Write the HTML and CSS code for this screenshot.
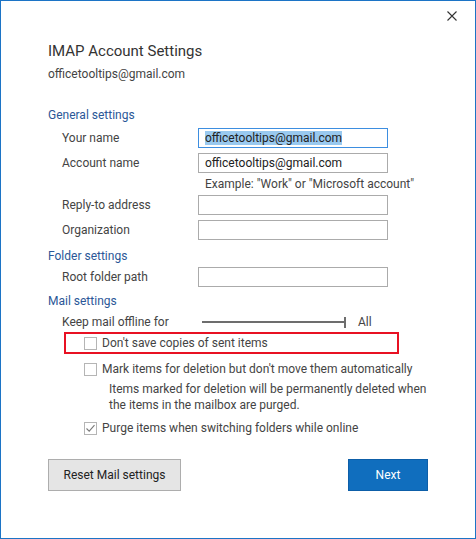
FILE: index.html
```html
<!DOCTYPE html>
<html lang="en">
<head>
    <meta charset="UTF-8">
    <meta name="viewport" content="width=device-width, initial-scale=1.0">
    <title>IMAP Account Settings</title>
    <link rel="stylesheet" href="styles.css">
</head>
<body>
    <div class="dialog">
        <div class="titlebar">
            <button class="close" type="button" aria-label="Close">
                <svg width="10" height="10" viewBox="0 0 10 10">
                    <path d="M0.5 0.5 L9.5 9.5 M9.5 0.5 L0.5 9.5" stroke="#333" stroke-width="1.1" fill="none"/>
                </svg>
            </button>
        </div>

        <h1 class="title">IMAP Account Settings</h1>
        <div class="account">officetooltips@gmail.com</div>

        <h2 class="section general">General settings</h2>
        <div class="field">
            <label for="your-name">Your name</label>
            <div class="input focused" id="your-name"><span class="selected">officetooltips@gmail.com</span></div>
        </div>
        <div class="field">
            <label for="account-name">Account name</label>
            <div class="input" id="account-name">officetooltips@gmail.com</div>
        </div>
        <div class="hint">Example: "Work" or "Microsoft account"</div>
        <div class="field">
            <label for="reply-to">Reply-to address</label>
            <div class="input" id="reply-to"></div>
        </div>
        <div class="field">
            <label for="organization">Organization</label>
            <div class="input" id="organization"></div>
        </div>

        <h2 class="section folder">Folder settings</h2>
        <div class="field root">
            <label for="root-folder">Root folder path</label>
            <div class="input" id="root-folder"></div>
        </div>

        <h2 class="section mail">Mail settings</h2>
        <div class="offline">
            <span class="offline-label">Keep mail offline for</span>
            <div class="slider"><span class="track"></span><span class="thumb"></span></div>
            <span class="offline-value">All</span>
        </div>

        <div class="check highlighted">
            <span class="box"></span>
            <span>Don't save copies of sent items</span>
        </div>
        <div class="check">
            <span class="box"></span>
            <span>Mark items for deletion but don't move them automatically</span>
        </div>
        <p class="note">Items marked for deletion will be permanently deleted when the items in the mailbox are purged.</p>
        <div class="check last">
            <span class="box checked">
                <svg width="11" height="11" viewBox="0 0 11 11">
                    <path d="M1.5 5.5 L4.2 8.2 L9.5 2.2" stroke="#7a7a7a" stroke-width="1.1" fill="none"/>
                </svg>
            </span>
            <span>Purge items when switching folders while online</span>
        </div>

        <div class="buttons">
            <button class="btn reset" type="button">Reset Mail settings</button>
            <button class="btn next" type="button">Next</button>
        </div>
    </div>
</body>
</html>
```

FILE: styles.css
```css
body {
    margin: 0;
    background-color: #fff;
    font-family: Roboto, "Noto Sans", sans-serif;
    font-size: 12px;
    line-height: 16px;
    color: #444;
}

.dialog {
    width: 476px;
    height: 539px;
    box-sizing: border-box;
    border: 1px solid #1c74c6;
    padding: 0 47px;
}

.titlebar {
    display: flex;
    justify-content: flex-end;
    height: 39px;
    margin-right: -29px;
}

.close {
    width: 10px;
    height: 10px;
    margin-top: 10px;
    padding: 0;
    border: none;
    background: none;
}

.close svg {
    display: block;
}

.title {
    margin: 0;
    font-size: 15px;
    line-height: 22px;
    font-weight: normal;
    color: #333;
}

.account {
    margin-top: 4px;
    color: #444;
}

.section {
    margin: 0;
    font-size: 12px;
    font-weight: normal;
    color: #2b5797;
}

.general {
    margin-top: 25px;
}

.folder {
    margin-top: 8px;
}

.mail {
    margin-top: 6px;
}

.field {
    display: grid;
    grid-template-columns: 136px 190px;
    align-items: center;
    margin-top: 5px;
    padding-left: 14px;
}

.folder + .field {
    margin-top: 3px;
}

.field label {
    color: #444;
}

.input {
    height: 20px;
    box-sizing: border-box;
    border: 1px solid #ababab;
    padding: 0 6px;
    line-height: 18px;
    color: #222;
    white-space: nowrap;
    overflow: hidden;
}

.input.focused {
    border-color: #3d8ee0;
}

.selected {
    background-color: #99c9ef;
}

.hint {
    margin-top: 3px;
    margin-bottom: -2px;
    padding-left: 157px;
    white-space: nowrap;
}

.offline {
    display: flex;
    align-items: center;
    margin-top: 5px;
    padding-left: 14px;
}

.offline-label {
    width: 140px;
}

.slider {
    display: flex;
    align-items: center;
    width: 144px;
    height: 16px;
}

.track {
    flex: 1;
    height: 2px;
    background-color: #6d6d6d;
}

.thumb {
    width: 2px;
    height: 11px;
    background-color: #6d6d6d;
}

.offline-value {
    margin-left: 12px;
}

.check {
    display: flex;
    align-items: center;
    gap: 5px;
    width: 313px;
    height: 18px;
    margin-top: 4px;
    margin-left: 16px;
    padding-left: 18px;
    border: 2px solid transparent;
    white-space: nowrap;
}

.check.highlighted {
    margin-top: 2px;
    border-color: #e81123;
}

.box {
    flex: none;
    width: 13px;
    height: 13px;
    box-sizing: border-box;
    border: 1px solid #b5b5b5;
    background-color: #fff;
    display: flex;
    align-items: center;
    justify-content: center;
}

.note {
    margin: 1px 0 0 61px;
    width: 322px;
}

.buttons {
    display: flex;
    justify-content: space-between;
    margin-top: 20px;
}

.btn {
    height: 32px;
    font-family: inherit;
    font-size: 12px;
    box-sizing: border-box;
    padding: 0;
}

.reset {
    width: 133px;
    border: 1px solid #adadad;
    background-color: #e5e5e5;
    color: #222;
}

.next {
    width: 80px;
    border: 1px solid #0d5ea8;
    background-color: #106ebe;
    color: #fff;
}
```
